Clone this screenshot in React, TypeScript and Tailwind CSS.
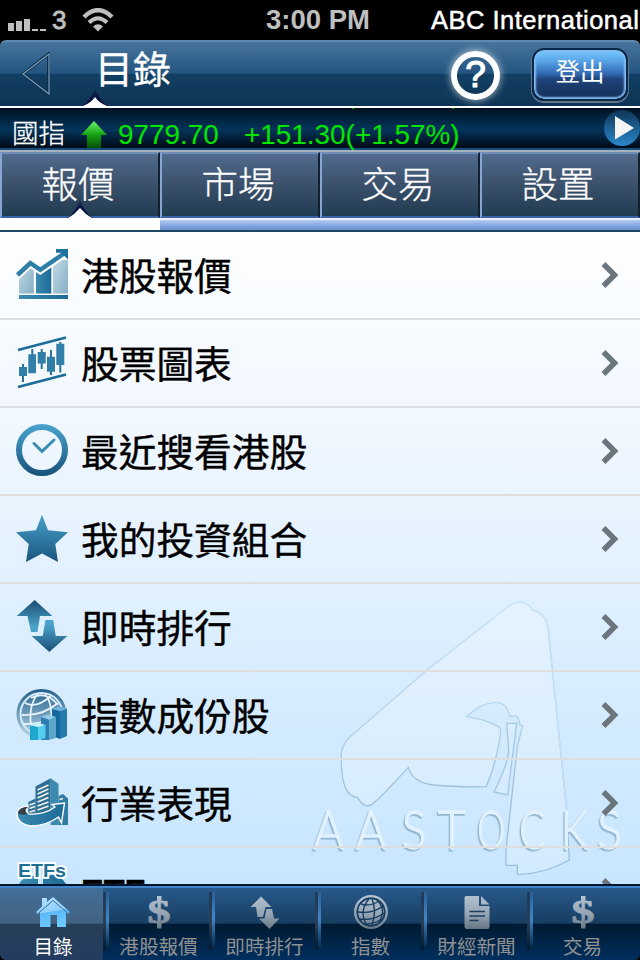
import { useState, type ReactNode } from "react"

const CJK = "font-['Noto_Sans_CJK_TC',sans-serif]"
const LATIN = "font-['Liberation_Sans','Noto_Sans_CJK_TC',sans-serif]"

function Gradients() {
  return (
    <svg width="0" height="0" className="absolute">
      <defs>
        <linearGradient id="blue" x1="0" y1="0" x2="0" y2="52" gradientUnits="userSpaceOnUse">
          <stop offset="0" stopColor="#4aa5cf" />
          <stop offset="1" stopColor="#17527a" />
        </linearGradient>
        <linearGradient id="flat" x1="0" y1="0" x2="1" y2="0">
          <stop offset="0" stopColor="#3b8ab0" />
          <stop offset="1" stopColor="#1c6a96" />
        </linearGradient>
        <linearGradient id="pale" x1="0" y1="0" x2="1" y2="1">
          <stop offset="0" stopColor="#c3dae5" />
          <stop offset="1" stopColor="#82aec4" />
        </linearGradient>
        <linearGradient id="arrowUp" x1="0" y1="0" x2="0" y2="1">
          <stop offset="0" stopColor="#1a4d75" />
          <stop offset="0.85" stopColor="#4aa3ca" />
        </linearGradient>
        <linearGradient id="arrowDown" x1="0" y1="0" x2="0" y2="1">
          <stop offset="0.15" stopColor="#4aa3ca" />
          <stop offset="1" stopColor="#1a4d75" />
        </linearGradient>
        <linearGradient id="globe" x1="0" y1="0" x2="0" y2="52" gradientUnits="userSpaceOnUse">
          <stop offset="0" stopColor="#205f88" />
          <stop offset="0.5" stopColor="#6f9dba" />
          <stop offset="1" stopColor="#c4dbe9" />
        </linearGradient>
        <linearGradient id="silver" x1="0" y1="0" x2="0" y2="34" gradientUnits="userSpaceOnUse">
          <stop offset="0" stopColor="#b6c3d1" />
          <stop offset="0.6" stopColor="#93a2b1" />
          <stop offset="1" stopColor="#667584" />
        </linearGradient>
        <linearGradient id="home" x1="0" y1="0" x2="0.2" y2="1">
          <stop offset="0" stopColor="#b5e2ff" />
          <stop offset="0.55" stopColor="#8ed0ff" />
          <stop offset="0.56" stopColor="#5cb9fb" />
          <stop offset="1" stopColor="#6cc8ff" />
        </linearGradient>
        <linearGradient id="green" x1="0" y1="0" x2="0" y2="1">
          <stop offset="0" stopColor="#6af56a" />
          <stop offset="0.5" stopColor="#15a315" />
          <stop offset="1" stopColor="#054f05" />
        </linearGradient>
        <linearGradient id="play" x1="0" y1="0" x2="0" y2="1">
          <stop offset="0" stopColor="#0e3558" />
          <stop offset="1" stopColor="#2b87cb" />
        </linearGradient>
        <radialGradient id="notch" cx="0.5" cy="1" r="0.95">
          <stop offset="0.5" stopColor="#0b1240" />
          <stop offset="1" stopColor="#0b1240" stopOpacity="0.4" />
        </radialGradient>
      </defs>
    </svg>
  )
}

function RowIcon({ children }: { children: ReactNode }) {
  return (
    <svg width="52" height="52" viewBox="0 0 52 52" className="mt-4 shrink-0 overflow-visible">
      {children}
    </svg>
  )
}

const quoteIcon = (
  <RowIcon>
    <path d="M3 28 14.3 17 17.8 19.5V45.5H3Z" fill="url(#pale)" />
    <path d="M20 21 24.3 24 35.3 16V45.5H20Z" fill="url(#flat)" />
    <path d="M37 16 43 12H52V45.5H37Z" fill="url(#pale)" />
    <path d="M1.5 28.5 14.3 16.5 24.3 23.3 47 8" fill="none" stroke="#fff" strokeWidth="6" />
    <path d="M1.5 27 14.3 15 24.3 21.8 48 5.5" fill="none" stroke="#2e7fa8" strokeWidth="4.5" />
    <path d="M40 1H52V11.5L48.5 8 45 4.8H40Z" fill="#1d6f9c" />
    <rect x="3" y="47" width="49" height="4" fill="url(#flat)" />
  </RowIcon>
)

const chartIcon = (
  <RowIcon>
    <path d="M2 14 50 1.5M2 51 50 38.5" stroke="#1d6d9a" strokeWidth="2.8" />
    <path d="M7 28V46M16.3 13V37M25.7 13V33M35 14V39M44.3 6V36.5" stroke="#25739d" strokeWidth="2" />
    <path d="M3 31h8v9H3ZM12.3 18.3H20v19H12.3ZM21.7 16h8v11.5h-8ZM31 20.7h8v15h-8ZM40.3 7.7h8V29h-8Z" fill="#2f7fa8" />
  </RowIcon>
)

const clockIcon = (
  <RowIcon>
    <circle cx="26" cy="26" r="23" fill="none" stroke="url(#blue)" strokeWidth="6" />
    <path d="M18 19.5 26 27.3 38 16" fill="none" stroke="#3a8db5" strokeWidth="3" strokeLinecap="round" />
  </RowIcon>
)

const starIcon = (
  <RowIcon>
    <path d="M26 2.7 32 18.3 52 20.3 39.3 32 42 50 26 41.5 10 50 12.7 32 0 20.3 20 18.3Z" fill="url(#blue)" />
  </RowIcon>
)

const rankIcon = (
  <RowIcon>
    <path d="M18.7 0 36.3 16H24L21.5 32H15L11.5 16H.7Z" fill="url(#arrowUp)" />
    <path d="M29.5 20H37.2L39.7 36H51.3L33.3 52 15.7 36H26.7Z" fill="url(#arrowDown)" />
  </RowIcon>
)

const indexIcon = (
  <RowIcon>
    <circle cx="25.5" cy="26" r="23.5" fill="none" stroke="url(#globe)" strokeWidth="3" />
    <circle cx="25.5" cy="26" r="20" fill="url(#globe)" />
    <g fill="none" stroke="#e6f3fd" strokeWidth="1.8">
      <path d="M9 15Q20 21 35 8M6 27Q27 28 42 15M7 36Q27 37 45 26" />
      <path d="M22 6Q11 18 16 44M29 6Q39 18 33 44M15 10Q30 2 42 17" />
    </g>
    <path d="M36 21 44 23V51L36 48Z" fill="#15679f" />
    <path d="M44 23 51 20.5V48L44 51Z" fill="#2679ad" />
    <path d="M36 21 43 18 51 20.5 44 23Z" fill="#6fb3da" />
    <path d="M25 29 33 31.5V52H25Z" fill="#2d7fb3" />
    <path d="M33 31.5 40 29V50L33 52Z" fill="#5ea5cc" />
    <path d="M25 29 32 26.5 40 29 33 31.5Z" fill="#93cbe8" />
    <path d="M14 37 22 39V52H14Z" fill="#1da7cd" />
    <path d="M22 39 29.5 37V50L22 52Z" fill="#54cdf0" />
    <path d="M14 37 21 34.5 29.5 37 22 39Z" fill="#c4f0fb" />
  </RowIcon>
)

const industryIcon = (
  <RowIcon>
    <path d="M19.5 10.5 34.7 2.3V40H19.5Z" fill="#2b6f94" />
    <path d="M34.7 2.3 42.5 8V49H34.7Z" fill="#3d88ae" />
    <path d="M12.3 26 19.5 22.5V40H12.3Z" fill="#2b6f94" />
    <path d="M42.5 20 47 18 52 22.5V49H42.5Z" fill="#2f7ba2" />
    <path
      d="M21.5 14 32.5 9M21.5 18 32.5 13M21.5 22 32.5 17M21.5 26 32.5 21.5M21.5 30 32.5 26M21.5 34 32.5 30M13.5 29 19 27M13.5 32.5 19 30.5M13.5 36 19 34.5M43.5 23.5 47 22.5"
      stroke="#f3eee9"
      strokeWidth="1.7"
    />
    <path
      d="M1 37Q1 31 13 30Q7 34 13 38Q28 39 39 31L36 28.5 48.5 27 45.5 47 42.5 41Q30 50 15 50Q1 48 1 37Z"
      fill="url(#flat)"
      stroke="#fff"
      strokeWidth="1.4"
    />
    <path d="M2 37Q3 31 12.5 30.7Q7 34 11 38Q6 40 2 37Z" fill="#3a3f45" />
  </RowIcon>
)

const etfIcon = (
  <RowIcon>
    <path d="M3 20Q10 9 22 13V30H3ZM27 13Q42 7 50 20V30H27Z" fill="url(#flat)" />
    <text
      x="2"
      y="13.3"
      textLength="48"
      lengthAdjust="spacingAndGlyphs"
      fill="#1f6f93"
      stroke="#fff"
      strokeWidth="3.5"
      paintOrder="stroke"
      className="font-['Liberation_Sans',sans-serif] text-[19px] font-bold"
    >
      ETFs
    </text>
  </RowIcon>
)

const rows = [
  { label: "港股報價", icon: quoteIcon },
  { label: "股票圖表", icon: chartIcon },
  { label: "最近搜看港股", icon: clockIcon },
  { label: "我的投資組合", icon: starIcon },
  { label: "即時排行", icon: rankIcon },
  { label: "指數成份股", icon: indexIcon },
  { label: "行業表現", icon: industryIcon },
  { label: "ETF", icon: etfIcon },
]

const homeIcon = (
  <svg width="36" height="34" viewBox="0 0 36 34">
    <path d="M7 3H12V7L18 2 35 17 33 19 31 17.5V32H22V20H15.5V32H5V17.5L3 19 1 17 7 11.5Z" fill="url(#home)" />
    <path d="M3 18.5 18 5.5 33 18.5" fill="none" stroke="#3a6c9a" strokeWidth="1" />
  </svg>
)

const dollarIcon = (
  <svg width="36" height="34" viewBox="0 0 36 34">
    <text
      x="6.5"
      y="28"
      textLength="23"
      lengthAdjust="spacingAndGlyphs"
      fill="url(#silver)"
      stroke="url(#silver)"
      strokeWidth="0.8"
      className="font-['Liberation_Serif',serif] text-[33px] font-bold"
    >
      $
    </text>
    <path d="M16 1H20.5V6H16ZM16 28H20.5V33.5H16Z" fill="url(#silver)" />
  </svg>
)

const swapIcon = (
  <svg width="36" height="34" viewBox="0 0 36 34">
    <path d="M14 1.5 24.5 12H18.5L16 22H10.5L9 12H3.5Z" fill="url(#silver)" />
    <path d="M19.5 14H25L27 23.5H32.5L22.5 34 12 23.5H17.5Z" fill="url(#silver)" />
  </svg>
)

const globeIcon = (
  <svg width="36" height="34" viewBox="0 0 36 34">
    <circle cx="18" cy="17" r="15.7" fill="none" stroke="url(#silver)" strokeWidth="2.5" />
    <circle cx="18" cy="17" r="13" fill="url(#silver)" />
    <g fill="none" stroke="#173d60" strokeWidth="1.4">
      <circle cx="18" cy="17" r="13.700" />
      <path d="M8 9Q17 12 26 6M5 17Q20 19 30 11M6 24Q21 26 31 18M13 29Q22 29 29 24" />
      <path d="M16 4Q6 15 13 29M19 4Q24 16 19 30M24 5Q34 15 26 27" />
    </g>
  </svg>
)

const newsIcon = (
  <svg width="36" height="34" viewBox="0 0 36 34">
    <path d="M7 1H20V11H30.5V32Q30.5 34 28.5 34H8Q5.5 34 5.5 32V3Q5.5 1 7 1Z" fill="url(#silver)" />
    <path d="M22 1 30.5 9.5H22Z" fill="url(#silver)" />
    <path d="M10.5 16.5H26M10.5 21H26M10.5 25.5H19.5" stroke="#1b3d5c" strokeWidth="1.7" />
  </svg>
)

const dock = [
  { label: "目錄", icon: homeIcon },
  { label: "港股報價", icon: dollarIcon },
  { label: "即時排行", icon: swapIcon },
  { label: "指數", icon: globeIcon },
  { label: "財經新聞", icon: newsIcon },
  { label: "交易", icon: dollarIcon },
]

function StatusBar() {
  return (
    <div className={`flex h-10 items-center bg-black text-[#bfbfbf] ${LATIN}`}>
      <svg width="38" height="12" className="mt-[9px] ml-2 shrink-0" fill="#bfbfbf">
        <path d="M0 4h6v8H0ZM8 2h6v10H8ZM16 0h6v12h-6ZM24 10h6v2h-6ZM32 10h6v2h-6Z" />
      </svg>
      <span className="ml-[6px] w-[15px] text-[26px] leading-none [-webkit-text-stroke:0.8px_#bfbfbf]">3</span>
      <svg width="32" height="24" viewBox="0 0 32 24" className="ml-[15px] shrink-0" fill="none" stroke="#bfbfbf">
        <path d="M2 9Q16-4.500 30 9" strokeWidth="4.500" />
        <path d="M7 14.500Q16 6 25 14.500" strokeWidth="4" />
        <path d="M16 23.500 11 18.500Q16 14 21 18.500Z" fill="#bfbfbf" stroke="none" />
      </svg>
      <span className="ml-[152px] w-[106px] text-[27.5px] leading-none font-bold whitespace-nowrap">3:00 PM</span>
      <span className="mt-px ml-[59px] text-[25.5px] leading-none tracking-[0.5px] whitespace-nowrap text-white [-webkit-text-stroke:0.5px_white]">
        ABC International
      </span>
    </div>
  )
}

function Header() {
  return (
    <div className="bg-black">
      <div className="relative flex h-[66px] items-center rounded-t-[6px] border-t-2 border-[#5f8bb0] bg-[linear-gradient(#47749b_0%,#235580_49%,#113f63_50%,#0e3455_100%)]">
        <svg width="30" height="44" viewBox="0 0 30 44" className="ml-[21px]" fill="none">
          <path d="M27.5 2V42L2 22Z" stroke="#0d2c48" strokeWidth="3" />
          <path d="M28 2V42L2 22Z" stroke="#7ba0be" strokeWidth="1.2" />
        </svg>
        <h1
          className={`-mt-[14px] ml-[44px] w-[356px] text-[38px] leading-none text-white [-webkit-text-stroke:0.3px_white] ${CJK}`}
        >
          目錄
        </h1>
        <span
          className={`mt-[2px] flex size-[49px] shrink-0 items-center justify-center rounded-full border-[6px] border-white text-[37px] text-white shadow-[0_0_7px_1px_#ffffff90] [-webkit-text-stroke:1.2px_white] ${LATIN}`}
        >
          ?
        </span>
        <button
          className={`ml-[32px] flex h-[53px] w-[96px] items-center justify-center rounded-[12px] border-2 border-[#0a2848] bg-[linear-gradient(#74c8ff_0%,#5aa5e6_22%,#336ab5_48%,#1f437a_60%,#142d55_100%)] pb-[5px] text-[24.5px] text-white shadow-[inset_0_0_2px_2px_#84bdf4,0_1px_0_1px_#60778f] ${CJK}`}
        >
          登出
        </button>
        <svg width="30" height="17" viewBox="0 0 30 17" className="absolute bottom-0 left-[80px]">
          <path d="M2 17Q9 13 15 0Q21 13 28 17Z" fill="url(#notch)" />
          <path d="M3 17Q11 14 15 8Q19 14 27 17Z" fill="#fff" />
        </svg>
      </div>
      <div className="h-[2px] bg-white" />
    </div>
  )
}

function Ticker() {
  return (
    <div className="relative h-[44px] overflow-hidden border-b-2 border-[#a7b1bb] bg-[linear-gradient(#00101f_0%,#02203a_20%,#033459_52%,#011d35_75%,#000a18_94%,#134d7c_95%)]">
      <div className="flex h-full items-center pt-[11px]">
        <span
          className={`-mt-1 ml-3 w-[54px] text-[26.5px] leading-none font-light text-white [-webkit-text-stroke:0.3px_white] ${CJK}`}
        >
          國指
        </span>
        <svg width="26" height="28" viewBox="0 0 26 28" className="ml-[15px]">
          <path d="M13 0 26 14H20V27H6V14H0Z" fill="url(#green)" />
        </svg>
        <span className={`ml-[11px] w-[126px] text-[27.9px] leading-none text-[#00e600] ${LATIN}`}>9779.70</span>
        <span className={`text-[27.9px] leading-none text-[#00e600] ${LATIN}`}>+151.30(+1.57%)</span>
      </div>
      <span className="absolute top-0 left-[352px] h-px w-[2px] bg-[#00a800]" />
      <span className="absolute top-0 left-[452px] h-px w-[2px] bg-[#00a800]" />
      <svg width="36" height="36" viewBox="0 0 36 36" className="absolute top-[2px] left-[604px]">
        <circle cx="18" cy="18" r="18" fill="url(#play)" />
        <path d="M11 6 30 18 11 29.500Z" fill="#f4f4f4" />
      </svg>
    </div>
  )
}

function Tabs({ active, onSelect }: { active: number; onSelect: (i: number) => void }) {
  return (
    <div className="relative border-b-2 border-[#1d4866]">
      <div className="grid h-[66px] grid-cols-4">
        {["報價", "市場", "交易", "設置"].map((tab, i) => (
          <button
            key={tab}
            onClick={() => onSelect(i)}
            className={`border-2 border-t-[#6f8db5] border-r-[#13202d] border-b-[#3a62a8] border-l-[#87a5d4] bg-[linear-gradient(#536d91,#3d536e_45%,#1f3a4f)] bg-origin-border pr-[4px] pb-[4px] text-[36.5px] leading-none font-light text-white [-webkit-text-stroke:0.3px_white] ${CJK}`}
          >
            {tab}
          </button>
        ))}
      </div>
      <div className="grid h-3 grid-cols-4">
        {[0, 1, 2, 3].map((i) => (
          <div
            key={i}
            className={
              i === active
                ? "bg-white"
                : "border-t-2 border-[#eaf0fa] bg-[linear-gradient(#b5cbf2,#7a9edb_70%,#6f93cc)]"
            }
          />
        ))}
      </div>
      <svg width="30" height="18" viewBox="0 0 30 18" className="absolute top-[48px] left-[65px]">
        <path d="M2 18Q10 13 15 0Q20 13 28 18Z" fill="url(#notch)" />
        <path d="M3 18Q10 14 15 8Q20 14 27 18Z" fill="#fff" />
      </svg>
    </div>
  )
}

const glyphs = [
  { ch: "A", x: 10, w: 92 },
  { ch: "A", x: 137, w: 92 },
  { ch: "S", x: 275, w: 74 },
  { ch: "T", x: 384, w: 84 },
  { ch: "O", x: 502, w: 84 },
  { ch: "C", x: 628, w: 78 },
  { ch: "K", x: 752, w: 82 },
  { ch: "S", x: 862, w: 74 },
]

function Watermark() {
  return (
    <svg width="330" height="304" viewBox="0 0 990 912" className="pointer-events-none absolute right-0 bottom-0">
      <defs>
        <linearGradient id="wmLine" x1="0" y1="60" x2="0" y2="620" gradientUnits="userSpaceOnUse">
          <stop offset="0" stopColor="#c4e0f7" />
          <stop offset="0.6" stopColor="#b4d5ec" />
          <stop offset="1" stopColor="#9dc0da" />
        </linearGradient>
      </defs>
      <path
        d="M600 75Q645 52 668 90Q710 100 715 150L770 690 778 840Q710 880 622 884V856H588Q586 830 590 790L622 500 638 437 630 435Q626 408 618 408H598Q592 368 560 368Q515 366 470 410Q530 418 570 443L572 460Q556 560 528 620Q440 622 370 615C315 608 300 580 295 562Q210 655 195 665C170 690 155 672 142 652C100 650 92 590 94 520Q98 485 130 462L345 275Z"
        fill="#fff"
        fillOpacity="0.2"
        stroke="url(#wmLine)"
        strokeWidth="4"
      />
      <path d="M715 150 770 690" stroke="#c2dff6" strokeWidth="4.500" />
      <path d="M590 430H620L593 645 552 636Q595 550 596 510Z" fill="#fff" fillOpacity="0.15" stroke="#a4c8e2" strokeWidth="4" />
      <g
        fill="#e3f2ff"
        stroke="#e3f2ff"
        strokeWidth="4"
        className="font-['Lato',sans-serif] text-[160px] font-light [filter:drop-shadow(-4px_5px_1px_#8fb4cf)]"
      >
        {glyphs.map((g, i) => (
          <text key={i} x={g.x} y="807" textLength={g.w} lengthAdjust="spacingAndGlyphs">
            {g.ch}
          </text>
        ))}
      </g>
    </svg>
  )
}

function Menu() {
  return (
    <div className="relative h-[652px] overflow-hidden bg-[linear-gradient(#fdfeff_0%,#f2f8ff_27%,#e2f1ff_52%,#d2eafe_78%,#c8e6ff_100%)]">
      <Watermark />
      <ul className="relative">
        {rows.map((row) => (
          <li key={row.label} className="flex h-[88px] border-b-2 border-[#dedede] pl-4">
            {row.icon}
            <span
              className={
                row.label === "ETF"
                  ? `mt-[24px] ml-[13px] flex-1 text-[34px] leading-[38px] font-bold [-webkit-text-stroke:0.5px_black] ${LATIN}`
                  : `mt-[23px] ml-[13px] flex-1 text-[37.7px] leading-[38px] text-black [-webkit-text-stroke:0.4px_black] ${CJK}`
              }
            >
              {row.label}
            </span>
            <svg width="18" height="28" viewBox="0 0 18 28" className="mt-[29px] mr-[21px]" fill="none">
              <path d="M2.500 3 13.500 14 2.500 25" stroke="#6b757c" strokeWidth="5.500" />
            </svg>
          </li>
        ))}
      </ul>
    </div>
  )
}

function Dock() {
  return (
    <nav className="bg-black">
      <div className="grid h-[76px] grid-cols-[103px_106px_106px_106px_106px_113px] overflow-hidden rounded-b-[6px] border-t-2 border-[#00162d] bg-[#001a33]">
        {dock.map((item, i) => (
          <a
            key={item.label}
            className={`relative flex flex-col items-center border-t-2 border-[#3f85cc] pt-[7px] last:pr-[7px] ${
              i === 0
                ? "bg-[linear-gradient(#427099_0%,#426280_49%,#263f58_50%,#243c60_100%)] pl-[3px] text-white"
                : "bg-[linear-gradient(#27598a_0%,#173d61_49%,#001a31_50%,#002f5e_100%)] pl-[5px] text-[#8f9193]"
            }`}
          >
            {i > 0 && (
              <span className="absolute top-1 left-0 flex h-[58px]">
                <span className="w-[3px] bg-[linear-gradient(#1d3b5a,#2a4058_50%,#001a31)]" />
                <span className="w-[3px] bg-[linear-gradient(#2a6098,#4286c6_45%,#002445)]" />
              </span>
            )}
            {item.icon}
            <span className={`mt-[7px] text-[19.6px] leading-none whitespace-nowrap ${CJK}`}>{item.label}</span>
          </a>
        ))}
      </div>
    </nav>
  )
}

export default function App() {
  const [tab, setTab] = useState(0)

  return (
    <div className="h-[960px] w-[640px] overflow-hidden bg-black">
      <Gradients />
      <StatusBar />
      <Header />
      <Ticker />
      <Tabs active={tab} onSelect={setTab} />
      <Menu />
      <Dock />
    </div>
  )
}
